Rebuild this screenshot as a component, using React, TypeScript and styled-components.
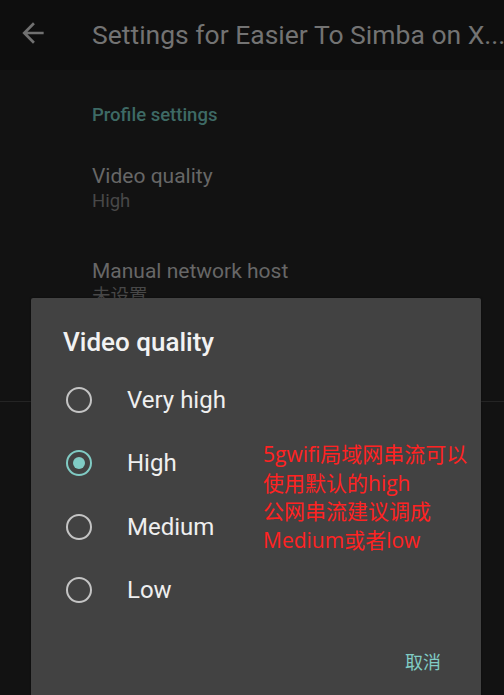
import * as React from 'react';
import styled, { createGlobalStyle } from 'styled-components';

const GlobalStyle = createGlobalStyle`
    html, body {
        margin: 0;
        padding: 0;
        background: #121212;
        overflow: hidden;
    }
    body {
        font-family: Roboto, "Noto Sans CJK SC", sans-serif;
    }
`;

interface Option {
    label: string;
    checked?: boolean;
}

const OPTIONS: Option[] = [
    { label: 'Very high' },
    { label: 'High', checked: true },
    { label: 'Medium' },
    { label: 'Low' },
];

const NOTE_LINES = ['5gwifi局域网串流可以', '使用默认的high', '公网串流建议调成', 'Medium或者low'];

const BackArrow: React.FC = () => (
    <svg width="32" height="32" viewBox="0 0 24 24">
        <path d="M20 11H7.83l5.59-5.59L12 4l-8 8 8 8 1.41-1.41L7.83 13H20v-2z" fill="#707070" />
    </svg>
);

const App: React.FC = () => (
    <Root>
        <GlobalStyle />
        <Toolbar>
            <BackButton>
                <BackArrow />
            </BackButton>
            <ToolbarTitle>Settings for Easier To Simba on X...</ToolbarTitle>
        </Toolbar>
        <SettingsList>
            <SectionHeader>Profile settings</SectionHeader>
            <Preference>
                <PrefTitle>Video quality</PrefTitle>
                <PrefSummary>High</PrefSummary>
            </Preference>
            <Preference>
                <PrefTitle>Manual network host</PrefTitle>
                <PrefSummary>未设置</PrefSummary>
            </Preference>
        </SettingsList>
        <Divider />

        <Dialog>
            <DialogTitle>Video quality</DialogTitle>
            <OptionList>
                {OPTIONS.map(option => (
                    <OptionRow key={option.label}>
                        <Radio $checked={!!option.checked} />
                        <OptionLabel>{option.label}</OptionLabel>
                    </OptionRow>
                ))}
            </OptionList>
            <DialogActions>
                <TextButton>取消</TextButton>
            </DialogActions>
            <Note>
                {NOTE_LINES.map(line => (
                    <div key={line}>{line}</div>
                ))}
            </Note>
        </Dialog>
    </Root>
);

const Root = styled.div`
    position: relative;
    width: 504px;
    height: 695px;
    background: #121212;
    overflow: hidden;
`;

const Toolbar = styled.div`
    display: flex;
    align-items: center;
    height: 70px;
    background: #0e0e0e;
`;

const BackButton = styled.div`
    display: flex;
    align-items: center;
    justify-content: center;
    width: 32px;
    margin-left: 17px;
    margin-right: 43px;
    margin-top: -4px;
`;

const ToolbarTitle = styled.div`
    flex: 1;
    min-width: 0;
    font-size: 26.5px;
    color: #737373;
    white-space: nowrap;
    margin-top: -2px;
`;

const SettingsList = styled.div`
    display: flex;
    flex-direction: column;
    padding-left: 92px;
    padding-top: 33px;
`;

const SectionHeader = styled.div`
    font-size: 18.5px;
    font-weight: 500;
    color: #3e6a65;
    line-height: 24px;
    margin-bottom: 36px;
`;

const Preference = styled.div`
    display: flex;
    flex-direction: column;
    margin-bottom: 45px;
`;

const PrefTitle = styled.div`
    font-size: 21px;
    color: #676767;
    line-height: 26px;
`;

const PrefSummary = styled.div`
    font-size: 18.5px;
    color: #484848;
    line-height: 24px;
`;

const Divider = styled.div`
    position: absolute;
    left: 0;
    right: 0;
    top: 401px;
    height: 1px;
    background: #242424;
`;

const Dialog = styled.div`
    position: absolute;
    left: 31px;
    top: 298px;
    width: 450px;
    height: 420px;
    background: #424242;
    border-radius: 2px;
    box-shadow: 0 0 2px rgba(0, 0, 0, 0.5);
    display: flex;
    flex-direction: column;
`;

const DialogTitle = styled.div`
    font-size: 26px;
    font-weight: 500;
    color: #f2f2f2;
    line-height: 28px;
    padding: 30px 0 0 32px;
`;

const OptionList = styled.div`
    display: flex;
    flex-direction: column;
    margin-top: 12px;
`;

const OptionRow = styled.div`
    display: flex;
    align-items: center;
    height: 63.5px;
    padding-left: 35px;
`;

const Radio = styled.div<{ $checked: boolean }>`
    position: relative;
    box-sizing: border-box;
    width: 26px;
    height: 26px;
    border-radius: 50%;
    border: 2.5px solid ${p => (p.$checked ? '#80cbc4' : '#c4c4c4')};
    margin-right: 35px;

    &::after {
        content: '';
        display: ${p => (p.$checked ? 'block' : 'none')};
        position: absolute;
        left: 50%;
        top: 50%;
        width: 12px;
        height: 12px;
        margin: -6px 0 0 -6px;
        border-radius: 50%;
        background: #80cbc4;
    }
`;

const OptionLabel = styled.div`
    font-size: 24px;
    color: #efefef;
`;

const DialogActions = styled.div`
    display: flex;
    justify-content: flex-end;
    padding: 21px 40px 0 0;
`;

const TextButton = styled.div`
    font-size: 18px;
    line-height: 36px;
    color: #80cbc4;
    font-family: "Noto Sans CJK SC", sans-serif;
`;

const Note = styled.div`
    position: absolute;
    left: 232px;
    top: 142px;
    font-family: "Open Sans", "Noto Sans CJK SC", sans-serif;
    font-size: 21px;
    line-height: 28.5px;
    color: #ff2222;
    white-space: nowrap;
`;

export default App;
